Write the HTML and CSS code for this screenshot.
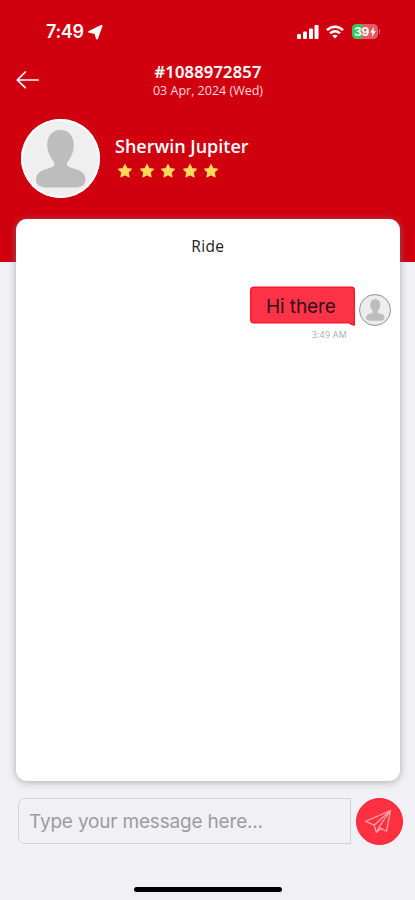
FILE: index.html
```html
<!DOCTYPE html>
<html lang="en">
<head>
<meta charset="utf-8">
<meta name="viewport" content="width=device-width, initial-scale=1">
<title>Ride chat</title>
<link rel="stylesheet" href="styles.css">
</head>
<body>
<svg class="defs" width="0" height="0" aria-hidden="true">
  <symbol id="person" viewBox="0 0 80 80">
    <path d="M40.500 11c8.500 0 13.300 6.200 13.300 15 0 7-2.900 12.500-5.900 16.500-1.600 2.200-1.100 4.200.9 5.200 4.200 2 8.100 2.200 11.900 4.500 3.500 2.200 4.800 5 4.800 8.300 0 6-5 8-10 8H26c-5 0-10-2-10-8 0-3.300 1.300-6.100 4.800-8.300 3.800-2.300 7.700-2.500 11.900-4.500 2-1 2.500-3 .9-5.200-3-4-6.400-9.500-6.400-16.500 0-8.800 4.800-15 13.300-15z" fill="#bdbdbd"/>
  </symbol>
  <symbol id="star" viewBox="0 0 14 14">
    <path d="M7 .8l1.900 4 4.300.5-3.200 3 .9 4.400L7 10.600l-3.900 2.100.9-4.400L.8 5.300l4.300-.5z" fill="#ffd95c" stroke="#ffd95c" stroke-width="1.400" stroke-linejoin="round"/>
  </symbol>
</svg>
<div class="screen">
  <header class="header">
    <div class="status">
      <div class="clock">
        <span>7:49</span>
        <svg width="15" height="15" viewBox="0 0 15 15"><path d="M13.500 1L9 13.400 7.300 8 1.200 6.800z" fill="#fff" stroke="#fff" stroke-width="2" stroke-linejoin="round"/></svg>
      </div>
      <div class="signals">
        <svg class="bars" width="22" height="14" viewBox="0 0 22 14" fill="#fff"><rect x="0" y="9" width="4" height="5" rx="1.200"/><rect x="6" y="6.500" width="4" height="7.500" rx="1.200"/><rect x="12" y="3.500" width="4" height="10.500" rx="1.200"/><rect x="17.500" y="0" width="4" height="14" rx="1.200"/></svg>
        <svg class="wifi" width="18" height="14" viewBox="0 0 18 14" fill="none" stroke="#fff" stroke-width="2.600"><path d="M1 5.200c4.600-4.700 11.400-4.700 16 0M4.100 8.400c2.900-2.800 6.900-2.800 9.800 0"/><path d="M9 13.600l-2.700-2.900c1.500-1.300 3.900-1.300 5.400 0z" fill="#fff" stroke="none"/></svg>
        <div class="battery"><span>39</span><svg width="6" height="10" viewBox="0 0 6 10"><path d="M3.900 0L.2 5.600h2.200L1.800 10l4-5.900H3.500z" fill="#fff"/></svg></div>
        <i class="battery-tip"></i>
      </div>
    </div>
    <div class="title-row">
      <svg class="back" width="24" height="20" viewBox="0 0 24 20" fill="none" stroke="#fff" stroke-width="1.700" stroke-linecap="round" stroke-linejoin="round"><path d="M22.200 10H1.200M9.300 2L1.200 10l8.100 7.600"/></svg>
      <div class="titles">
        <h1>#1088972857</h1>
        <p>03 Apr, 2024 (Wed)</p>
      </div>
    </div>
    <div class="profile">
      <div class="avatar"><svg width="80" height="80"><use href="#person"/></svg></div>
      <div class="person">
        <h2>Sherwin Jupiter</h2>
        <div class="stars">
          <svg width="14" height="14"><use href="#star"/></svg>
          <svg width="14" height="14"><use href="#star"/></svg>
          <svg width="14" height="14"><use href="#star"/></svg>
          <svg width="14" height="14"><use href="#star"/></svg>
          <svg width="14" height="14"><use href="#star"/></svg>
        </div>
      </div>
    </div>
  </header>
  <main class="chat">
    <h3>Ride</h3>
    <div class="message">
      <div class="message-body">
        <div class="bubble">
          <svg class="bubble-shape" width="105" height="40" viewBox="0 0 105 40"><path d="M3.500 1.200H101.500a2.800 2.800 0 0 1 2.800 2.800V39c-2.500-.1-3.800-.9-5-2.200H3.500A2.800 2.800 0 0 1 .7 34V4A2.800 2.800 0 0 1 3.500 1.200z" fill="#ff3347" stroke="#fb1730" stroke-width="1.400"/></svg>
          <span>Hi there</span>
        </div>
        <time>3:49 AM</time>
      </div>
      <div class="mini-avatar"><svg width="30" height="30"><use href="#person"/></svg></div>
    </div>
  </main>
  <div class="composer">
    <div class="input">Type your message here...</div>
    <div class="send"><svg width="28" height="26" viewBox="0 0 28 26" fill="none" stroke="#ff9fa8" stroke-width="1.300" stroke-linejoin="round" stroke-linecap="round"><path d="M26.500 1.500L1.500 12.300l8.700 3.900L26.500 1.500l-4 20.800-7.500-4.100L26.500 1.500M10.200 16.200l2 7.200L15 18.200M12.200 23.400l4.800-4.200"/></svg></div>
  </div>
  <div class="home"></div>
</div>
</body>
</html>
```

FILE: styles.css
```css
* { box-sizing: border-box; }
body { margin: 0; background: #f1f0f5; font-family: "Open Sans", "Noto Sans", sans-serif; }
h1, h2, h3, p { margin: 0; }
svg { display: block; flex: none; }
.defs { position: absolute; }
.screen { width: 415px; height: 900px; display: flex; flex-direction: column; overflow: hidden; background: #f1f0f5; }
.header { height: 262px; flex: none; background: #d0000f; color: #fff; }
.status { height: 62px; padding: 21px 35px 0 46px; display: flex; justify-content: space-between; align-items: flex-start; }
.clock { display: flex; align-items: center; gap: 4px; height: 22px; font: 600 18px/22px Inter, sans-serif; letter-spacing: -0.35px; }
.signals { display: flex; align-items: center; height: 21px; }
.bars { margin-right: 7px; }
.wifi { margin-right: 8px; }
.battery { width: 26px; height: 15px; border-radius: 4.500px; display: flex; align-items: center; justify-content: center; gap: 1px; background: linear-gradient(90deg, #35c759 0 10px, #e15b65 10px); font: 700 12px/15px Inter, sans-serif; letter-spacing: -0.3px; }
.battery-tip { width: 1px; height: 5px; margin-left: 1px; border-radius: 0 2px 2px 0; background: #e15b65; }
.title-row { height: 56px; display: grid; grid-template-columns: 40px 1fr 40px; }
.back { margin: 8px 0 0 16px; }
.titles { text-align: center; padding-left: 1px; }
.titles h1 { font-size: 16.500px; line-height: 19px; font-weight: 600; letter-spacing: 0.2px; -webkit-text-stroke: 0.2px #fff; }
.titles p { font-size: 12.500px; line-height: 17px; margin-top: 1px; letter-spacing: 0; color: #ffd9dc; }
.profile { display: flex; padding-left: 21px; }
.avatar { width: 79px; height: 79px; margin-top: 1px; flex: none; overflow: hidden; border-radius: 50%; background: #efefef; box-shadow: inset 0 0 0 2px #fff; }
.avatar svg { margin-left: -1px; }
.person { padding: 16px 0 0 15px; }
.person h2 { font-size: 18px; line-height: 25px; font-weight: 600; letter-spacing: 0; white-space: nowrap; }
.stars { display: flex; gap: 7.500px; margin: 5px 0 0 3px; }
.chat { flex: none; height: 562px; margin: -43px 15.500px 0 16px; border-radius: 11px; background: #fff; box-shadow: 0 1px 7px rgba(130, 130, 138, 0.65); position: relative; }
.chat h3 { padding-top: 16px; text-align: center; font-size: 15.500px; line-height: 22px; font-weight: 500; letter-spacing: 0.3px; color: #222; }
.message { display: flex; justify-content: flex-end; margin: 29px 8.500px 0 0; }
.message-body { width: 105px; margin-right: 4px; }
.bubble { height: 41px; display: grid; }
.bubble-shape, .bubble span { grid-area: 1 / 1; }
.bubble span { z-index: 1; padding-left: 16px; font: 400 19px/41px Inter, sans-serif; letter-spacing: -0.1px; color: #30101a; }
.message time { display: block; margin-right: 8px; text-align: right; font-size: 9px; line-height: 15px; letter-spacing: 0.2px; color: #aaa; }
.mini-avatar { width: 32px; height: 32px; margin-top: 8px; border: 1px solid #929292; border-radius: 50%; overflow: hidden; background: #ededed; }
.composer { height: 47px; margin: 17px 12px 0 18px; display: flex; justify-content: space-between; flex: none; }
.input { width: 333px; height: 46px; padding-left: 10px; border: 1px solid #d3d2d7; border-radius: 7px 0 0 7px; font: 400 19px/45px Inter, sans-serif; letter-spacing: -0.18px; color: #9c9ca1; white-space: nowrap; }
.send { width: 47px; height: 47px; border-radius: 50%; background: #ff3040; border: 1px solid #ff1b30; display: flex; align-items: center; justify-content: center; padding-right: 3px; }
.home { width: 148px; height: 5px; margin: 42px auto 0; border-radius: 3px; background: #000; flex: none; }
```
